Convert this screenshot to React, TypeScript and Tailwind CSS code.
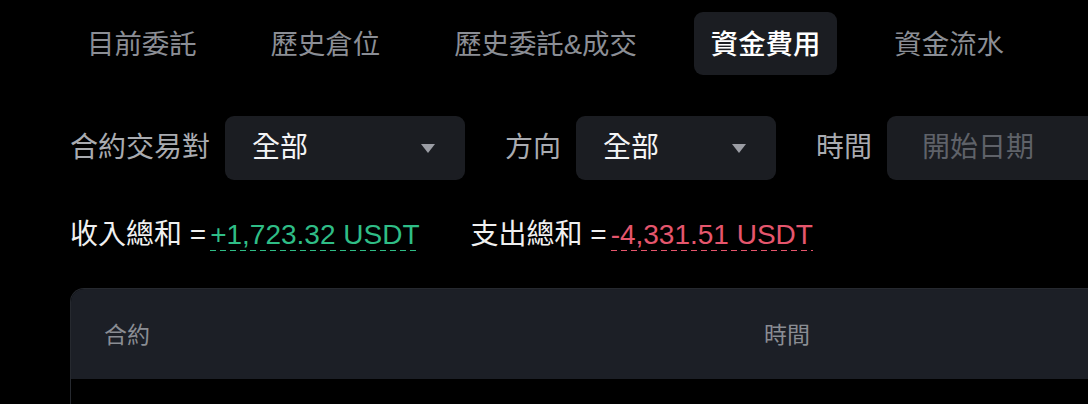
import React from "react";

const tabs = ["目前委託", "歷史倉位", "歷史委託&成交", "資金費用", "資金流水"];

function Caret() {
  return (
    <svg width="14" height="9" viewBox="0 0 14 9" className="shrink-0">
      <path d="M0 0 H14 L7 9 Z" fill="#9b9da4" />
    </svg>
  );
}

function Select({ width, value }: { width: string; value: string }) {
  return (
    <div
      className={`${width} h-[64px] shrink-0 rounded-[9px] bg-[#1b1d22] flex items-center justify-between pl-[27px] pr-[30px]`}
    >
      <span className="text-[#f4f4f5]">{value}</span>
      <Caret />
    </div>
  );
}

export default function App() {
  const active = "資金費用";

  return (
    <div
      className="w-[1088px] h-[404px] overflow-hidden bg-black text-[28px] leading-none"
      style={{ fontFamily: '"Liberation Sans", "Noto Sans CJK TC", sans-serif' }}
    >
      <div className="pl-[70px] pt-[12px]">
        {/* tabs */}
        <div className="flex gap-[40px] text-[27.4px]">
          {tabs.map((t) => (
            <div
              key={t}
              className={`h-[63px] px-[17px] pt-[2px] rounded-[9px] flex items-center whitespace-nowrap ${
                t === active ? "bg-[#1b1d22] text-white font-medium" : "text-[#8b8e95]"
              }`}
            >
              {t}
            </div>
          ))}
        </div>

        {/* filters */}
        <div className="mt-[41px] flex items-center whitespace-nowrap">
          <span className="text-[#a9abb0] mr-[15px]">合約交易對</span>
          <Select width="w-[240px]" value="全部" />
          <span className="text-[#a9abb0] ml-[40px] mr-[15px]">方向</span>
          <Select width="w-[200px]" value="全部" />
          <span className="text-[#a9abb0] ml-[40px] mr-[15px]">時間</span>
          <div className="w-[240px] h-[64px] shrink-0 rounded-[9px] bg-[#1b1d22] flex items-center pl-[35px]">
            <span className="text-[#5f6269]">開始日期</span>
          </div>
        </div>

        {/* totals */}
        <div className="mt-[41px] flex items-baseline whitespace-nowrap">
          <span className="text-[#f0f0f0]">收入總和 =</span>
          <span className="ml-[4px] text-[#2fbd86] pb-[2px] bg-[repeating-linear-gradient(to_right,#2fbd86_0_6px,transparent_6px_10px)] bg-no-repeat bg-bottom bg-[length:100%_1.5px]">
            +1,723.32 USDT
          </span>
          <span className="ml-[51px] text-[#f0f0f0]">支出總和 =</span>
          <span className="ml-[4px] text-[#e5566d] pb-[2px] bg-[repeating-linear-gradient(to_right,#e5566d_0_6px,transparent_6px_10px)] bg-no-repeat bg-bottom bg-[length:100%_1.5px]">
            -4,331.51 USDT
          </span>
        </div>

        {/* table */}
        <div className="mt-[37px] w-[1200px] rounded-tl-[14px] border-l border-t border-[#26292f] overflow-hidden">
          <div className="h-[90px] bg-[#1c1f26] grid grid-cols-[660px_1fr] items-center pl-[33px] pt-[2px] text-[23px] text-[#8a8d93]">
            <span>合約</span>
            <span>時間</span>
          </div>
          <div className="h-[40px]" />
        </div>
      </div>
    </div>
  );
}
